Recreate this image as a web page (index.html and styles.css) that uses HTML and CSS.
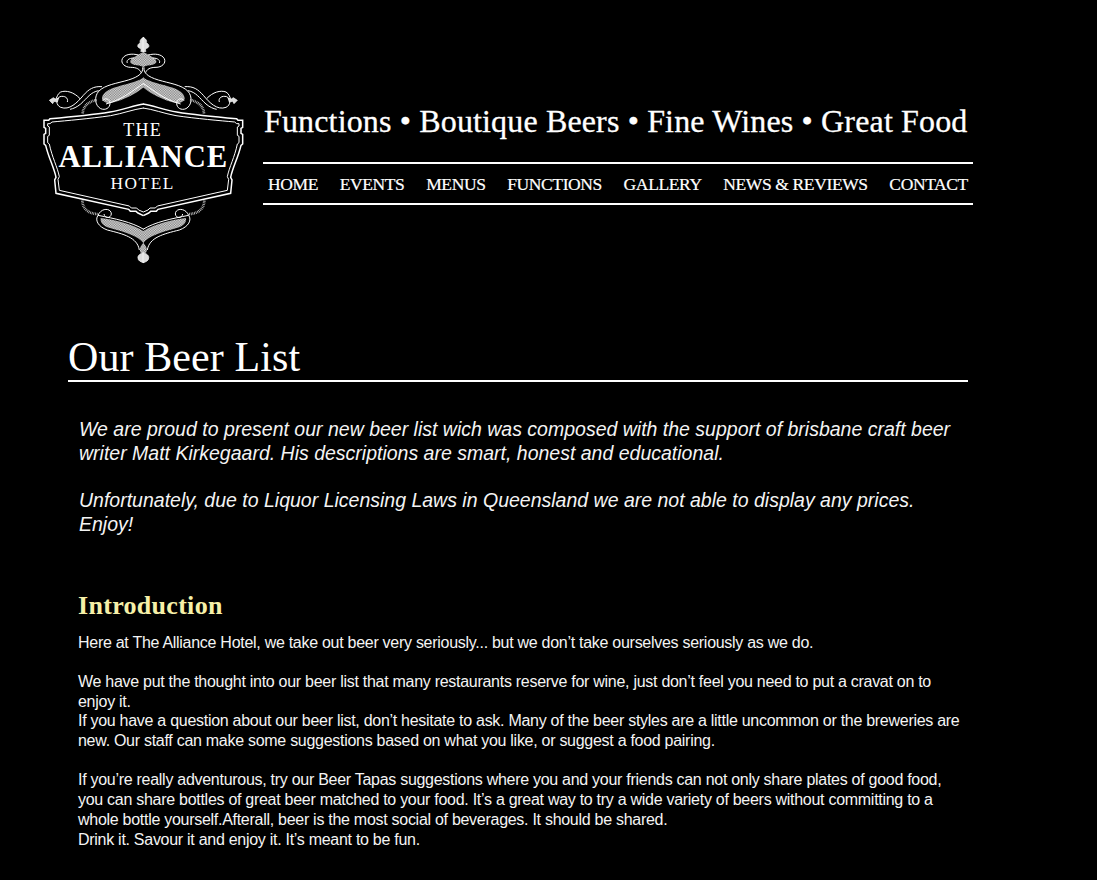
FILE: index.html
```html
<!DOCTYPE html>
<html lang="en">
<head>
<meta charset="utf-8">
<title>Our Beer List - The Alliance Hotel</title>
<link rel="stylesheet" href="styles.css">
</head>
<body>
<header class="site-header">
  <svg class="logo" viewBox="0 0 690 720" width="230" height="240" role="img" aria-label="The Alliance Hotel">
    <defs>
      <pattern id="hatch" width="5" height="5" patternUnits="userSpaceOnUse">
        <rect width="5" height="5" fill="#777"/>
        <rect width="2.5" height="2.5" fill="#e4e4e4"/>
        <rect x="2.5" y="2.5" width="2.5" height="2.5" fill="#e4e4e4"/>
      </pattern>
      <g id="half">
        <!-- finial and top bulb -->
        <path class="solid" d="M341 22C333 26 328 32 331 38C323 42 320 50 328 54C332 56 336 58 332 64L341 66Z"/>
        <path class="hatched" d="M341 66C330 70 322 76 312 82C298 90 296 100 312 104C322 106 334 106 341 112Z"/>
        <path class="line" d="M326 75C305 70 285 72 277 86C271 100 285 112 302 112C320 112 330 118 333 128"/>
        <path class="line" d="M312 84C296 84 288 92 292 99"/>
        <!-- main wing -->
        <path class="hatched" d="M341 142C330 152 300 160 262 170C232 178 214 192 216 208C220 216 230 220 240 220C280 212 320 190 341 172Z"/>
        <path class="line" d="M338 112C340 128 328 140 295 150C262 160 225 164 206 184C192 200 194 226 212 236C226 242 240 234 240 220C240 206 224 202 218 212"/>
        <path class="line" d="M341 160C310 180 280 208 228 222"/>
        <!-- vine -->
        <path class="line" d="M216 170C190 168 176 178 160 196C142 218 118 242 92 232C78 226 76 206 90 200C104 196 116 204 112 216"/>
        <path class="line" d="M206 182C182 186 172 204 152 222C140 232 130 236 120 238"/>
        <path class="line" d="M150 206C132 186 108 180 92 186C82 192 82 200 78 206"/>
        <path class="solid" d="M58 211L70 203L76 207L86 204L82 216L72 214L68 221Z"/>
        <path class="dots" d="M200 210C178 214 160 226 158 250"/>
        <!-- shield -->
        <path class="line fat" d="M341 222C310 226 280 240 240 246C180 256 110 262 60 266L56 271H42V292L47 295V310L42 313V342L47 346C56 384 72 412 78 442L74 450L78 490L296 538L301 544H318L324 549L340 557"/>
        <path class="line" d="M341 234C310 238 280 250 242 257C180 266 110 272 66 276L60 281H53V288L58 291V316L53 319V338L58 342C66 382 82 410 88 440L84 448L88 481L298 528L304 534H320L326 540L340 546"/>
        <!-- bottom ornament -->
        <path class="dots" d="M157 512C158 540 180 552 204 552"/>
        <path class="hatched" d="M212 564C255 570 305 580 341 604V640C325 618 290 608 240 594C218 588 210 576 212 564Z"/>
        <path class="line" d="M341 598C305 576 255 566 204 556C214 532 244 534 244 552C242 566 224 566 222 552"/>
        <path class="line" d="M204 556C194 570 204 590 232 600C280 612 322 622 328 660"/>
        <path class="hatched" d="M341 638C332 646 326 658 332 668L341 670Z"/>
        <path class="solid" d="M341 668C330 670 322 678 324 684C324 692 332 696 341 698Z"/>
      </g>
    </defs>
    <use href="#half"/>
    <use href="#half" transform="translate(680 0) scale(-1 1)"/>
    <text class="logo-the" x="338" y="319" text-anchor="middle">THE</text>
    <text class="logo-main" x="340" y="410" text-anchor="middle">ALLIANCE</text>
    <text class="logo-hotel" x="338" y="476" text-anchor="middle">HOTEL</text>
  </svg>
  <div class="header-right">
    <p class="tagline">Functions • Boutique Beers • Fine Wines • Great Food</p>
    <nav class="main-nav">
      <a href="#">HOME</a>
      <a href="#">EVENTS</a>
      <a href="#">MENUS</a>
      <a href="#">FUNCTIONS</a>
      <a href="#">GALLERY</a>
      <a href="#">NEWS &amp; REVIEWS</a>
      <a href="#">CONTACT</a>
    </nav>
  </div>
</header>
<main class="content">
  <h1 class="page-title">Our Beer List</h1>
  <div class="intro">
    <p>We are proud to present our new beer list wich was composed with the support of brisbane craft beer writer Matt Kirkegaard. His descriptions are smart, honest and educational.</p>
    <p>Unfortunately, due to Liquor Licensing Laws in Queensland we are not able to display any prices.<br>Enjoy!</p>
  </div>
  <section class="article">
    <h2>Introduction</h2>
    <p>Here at The Alliance Hotel, we take out beer very seriously... but we don’t take ourselves seriously as we do.</p>
    <p>We have put the thought into our beer list that many restaurants reserve for wine, just don’t feel you need to put a cravat on to enjoy it.<br>If you have a question about our beer list, don’t hesitate to ask. Many of the beer styles are a little uncommon or the breweries are new. Our staff can make some suggestions based on what you like, or suggest a food pairing.</p>
    <p>If you’re really adventurous, try our Beer Tapas suggestions where you and your friends can not only share plates of good food, you can share bottles of great beer matched to your food. It’s a great way to try a wide variety of beers without committing to a whole bottle yourself.Afterall, beer is the most social of beverages. It should be shared.<br>Drink it. Savour it and enjoy it. It’s meant to be fun.</p>
  </section>
</main>
</body>
</html>
```

FILE: styles.css
```css
html, body {
  margin: 0;
  background: #000;
  color: #fff;
  height: 880px;
  overflow: hidden;
}
body {
  font-family: "Liberation Sans", Arial, sans-serif;
}
.site-header {
  display: flex;
  padding: 30px 0 0 30px;
}
.logo {
  flex: none;
  display: block;
}
.line {
  fill: none;
  stroke: #fff;
  stroke-width: 3;
}
.fat {
  stroke-width: 4.5;
}
.solid {
  fill: #ddd;
  stroke: #fff;
  stroke-width: 2;
}
.hatched {
  fill: url(#hatch);
  stroke: none;
}
.dots {
  fill: none;
  stroke: #c4c4c4;
  stroke-width: 8;
  stroke-dasharray: 2.5 2.5;
}
.logo-the, .logo-main, .logo-hotel {
  font-family: "Liberation Serif", serif;
  fill: #fff;
}
.logo-the {
  font-size: 54px;
  letter-spacing: 4px;
}
.logo-main {
  font-size: 92px;
  font-weight: bold;
  letter-spacing: 3px;
}
.logo-hotel {
  font-size: 52px;
  letter-spacing: 4.5px;
}
.header-right {
  width: 710px;
  margin-left: 3px;
  padding-top: 70px;
}
.tagline {
  margin: 0 0 20px;
  padding-left: 1px;
  font-family: "Liberation Serif", serif;
  font-size: 32px;
  line-height: 42px;
  white-space: nowrap;
  letter-spacing: 0.15px;
  -webkit-text-stroke: 0.3px #fff;
}
.main-nav {
  display: flex;
  justify-content: space-between;
  align-items: center;
  height: 38px;
  padding: 1px 5px 0;
  border-top: 2px solid #fff;
  border-bottom: 2px solid #fff;
}
.main-nav a {
  font-family: "Liberation Serif", serif;
  font-size: 17.5px;
  letter-spacing: -0.38px;
  color: #fff;
  text-decoration: none;
  -webkit-text-stroke: 0.2px #fff;
}
.content {
  width: 900px;
  margin: 64px 0 0 68px;
}
.page-title {
  margin: 0;
  font-family: "Liberation Serif", serif;
  font-weight: normal;
  font-size: 42px;
  letter-spacing: 0.1px;
  line-height: 46px;
  border-bottom: 2px solid #fff;
}
.intro {
  margin: 36px 0 0 11px;
  font-size: 19.5px;
  line-height: 23.7px;
  font-style: italic;
  color: #f4f4f4;
}
.intro p {
  margin: 0 0 23.7px;
}
.article {
  margin: 54px 0 0 10px;
}
.article h2 {
  margin: 0;
  font-family: "Liberation Serif", serif;
  font-size: 26px;
  letter-spacing: 0.3px;
  line-height: 30px;
  color: #f6f0a8;
}
.article p {
  margin: 0 0 19.7px;
  font-size: 16px;
  letter-spacing: -0.28px;
  line-height: 19.7px;
  color: #f4f4f4;
}
.article h2 + p {
  margin-top: 12px;
}
```
